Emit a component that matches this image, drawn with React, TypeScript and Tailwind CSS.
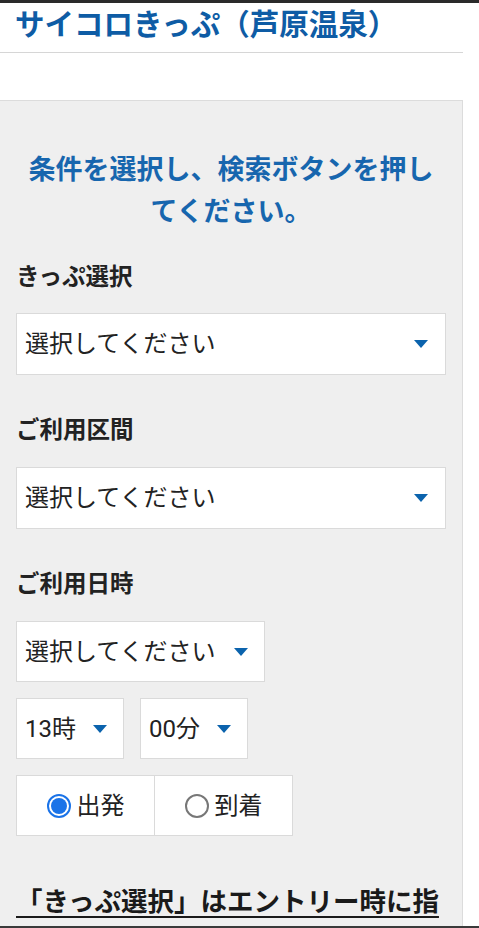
import type { ReactNode } from "react";

function Caret() {
  return (
    <svg width="14" height="8" viewBox="0 0 14 8" className="shrink-0">
      <path d="M0 0h14L7 8z" fill="#0b63ad" />
    </svg>
  );
}

function Field({ children }: { children: ReactNode }) {
  return <div className="text-[23.5px] font-bold leading-[32px] text-[#222]">{children}</div>;
}

function WideSelect({ label }: { label: string }) {
  return (
    <div className="flex h-[62px] items-center justify-between border border-[#dadada] bg-white pl-[8px] pr-[17px]">
      <span className="text-[24px] leading-none text-[#222]">{label}</span>
      <Caret />
    </div>
  );
}

function SmallSelect({ label, gap }: { label: string; gap: string }) {
  return (
    <div className={`flex h-[61px] w-fit items-center border border-[#dadada] bg-white pl-[8px] pr-[16px] ${gap}`}>
      <span className="text-[24px] leading-none text-[#222]">{label}</span>
      <Caret />
    </div>
  );
}

function Radio({ label, checked }: { label: string; checked?: boolean }) {
  return (
    <div className="flex flex-1 items-center justify-center gap-[6px]">
      {checked ? (
        <span className="flex h-[24px] w-[24px] items-center justify-center rounded-full border-2 border-[#1a73e8]">
          <span className="h-[16px] w-[16px] rounded-full bg-[#1a73e8]" />
        </span>
      ) : (
        <span className="h-[24px] w-[24px] rounded-full border-2 border-[#777]" />
      )}
      <span className="text-[24px] leading-none text-[#222]">{label}</span>
    </div>
  );
}

export default function App() {
  return (
    <div className="min-h-screen bg-white font-['Roboto','Noto_Sans_CJK_JP',sans-serif]">
      <div className="h-[3px] bg-[#2a2a2a]" />

      {/* Page title */}
      <div className="w-[463px] border-b border-[#d6d6d6] pl-[15px] pt-[2px] pb-[7px]">
        <h1 className="text-[29.5px] font-bold leading-[40px] text-[#0e5ca5]">サイコロきっぷ（芦原温泉）</h1>
      </div>

      {/* Search panel */}
      <div className="mt-[47px] w-[463px] border-t border-r border-[#dcdcdc] bg-[#efefef] px-[16px] pt-[48px] pb-[40px]">
        <p className="text-center text-[27px] font-bold leading-[42px] text-[#1766ae]">
          条件を選択し、検索ボタンを押し
          <br />
          てください。
        </p>

        <div className="mt-[28px]">
          <Field>きっぷ選択</Field>
          <div className="mt-[20px]">
            <WideSelect label="選択してください" />
          </div>
        </div>

        <div className="mt-[39px]">
          <Field>ご利用区間</Field>
          <div className="mt-[21px]">
            <WideSelect label="選択してください" />
          </div>
        </div>

        <div className="mt-[39px]">
          <Field>ご利用日時</Field>
          <div className="mt-[21px] flex flex-col gap-[16px]">
            <SmallSelect label="選択してください" gap="gap-[18px]" />
            <div className="flex gap-[16px]">
              <SmallSelect label="13時" gap="gap-[17px]" />
              <SmallSelect label="00分" gap="gap-[17px]" />
            </div>
            <div className="flex h-[61px] w-[277px] border border-[#dadada] bg-white">
              <Radio label="出発" checked />
              <div className="w-px bg-[#dadada]" />
              <Radio label="到着" />
            </div>
          </div>
        </div>

        <p className="mt-[46px] text-[26.5px] font-bold leading-[40px] text-[#1a1a1a] underline decoration-2 underline-offset-[5px]">
          「きっぷ選択」はエントリー時に指定したきっぷを選択してください。
        </p>
      </div>

      <div className="fixed inset-x-0 bottom-0 h-[2px] bg-[#3a3a3a]" />
    </div>
  );
}
